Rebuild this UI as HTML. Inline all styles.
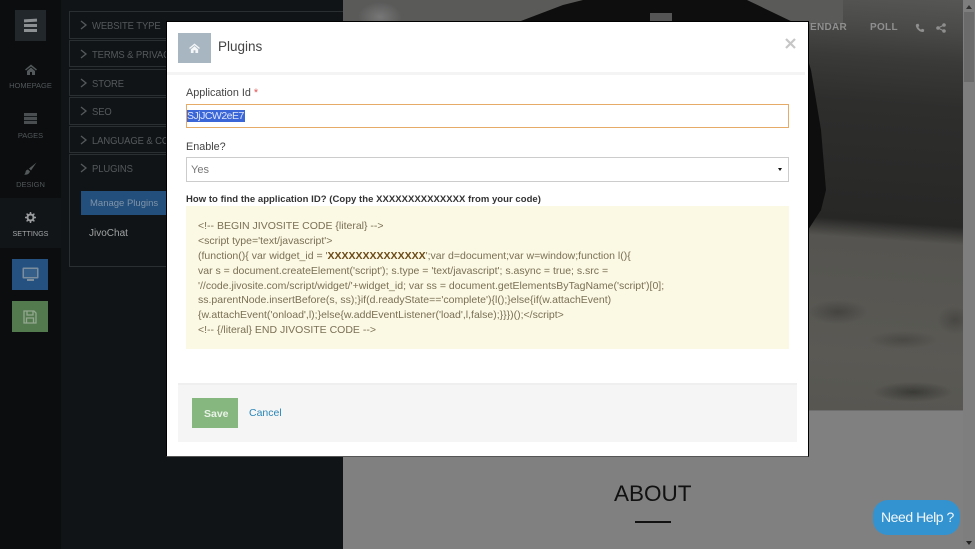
<!DOCTYPE html>
<html><head><meta charset="utf-8"><title>Plugins</title>
<style>
*{box-sizing:border-box}
html,body{margin:0;padding:0;width:975px;height:549px;overflow:hidden;background:#808080;font-family:"Liberation Sans",sans-serif}
.a{position:absolute}
.t{position:absolute;white-space:nowrap}
.acc{position:absolute;left:69px;width:274px;border:1px solid #2a2f31;border-right:0;color:#55595c;font-size:10.5px}
.acc span{position:absolute;left:22px;top:8px;white-space:nowrap;transform:scaleX(.9);transform-origin:left center;letter-spacing:-.1px}
.acc svg{position:absolute;left:10px;top:8px}
.nl{position:absolute;left:0;width:61px;text-align:center;font-size:7.5px;color:#52575a}
.lb{position:absolute;left:186px;font-size:10.8px;color:#444;white-space:nowrap}
.code{position:absolute;left:198px;font-size:10.5px;color:#7a7055;white-space:nowrap}
</style></head><body>

<!-- website behind -->
<div class="a" style="left:0;top:0;width:975px;height:549px;background:#808080"></div>
<div class="a" style="left:343px;top:0;width:620px;height:411px;overflow:hidden;background:
radial-gradient(ellipse 30px 12px at 495px 312px,#454441 0,rgba(69,68,65,0) 100%),
radial-gradient(ellipse 35px 9px at 560px 340px,#4a4945 0,rgba(74,73,69,0) 100%),
radial-gradient(ellipse 40px 10px at 570px 392px,#3a3a37 0,rgba(58,58,55,0) 100%),
radial-gradient(ellipse 18px 14px at 612px 320px,#484743 0,rgba(72,71,67,0) 100%),
linear-gradient(184deg,#565654 0,#4a4a48 7%,#3a3a38 14%,#2e2e2d 24%,#272726 50%,#555450 54%,#5a5954 80%,#55544f 100%)">
<div class="a" style="left:0;top:0;width:500px;height:24px;background:#5a5a59"></div>
<div class="a" style="left:15px;top:2px;width:44px;height:30px;background:radial-gradient(ellipse at center,#777 0,rgba(119,119,119,0) 70%)"></div>
<div class="a" style="left:0;top:0;width:620px;height:240px;background:#0e0e0e;clip-path:polygon(170px 24px,220px 5px,240px 0,404px 0,454px 24px,468px 70px,478px 130px,483px 190px,478px 210px,465px 230px,170px 240px)"></div>
<div class="a" style="left:307px;top:13px;width:22px;height:12px;background:#555"></div>
<div class="a" style="left:0;top:410px;width:620px;height:1px;background:#6d6d6d"></div>
</div>
<div class="t" style="left:810px;top:22px;font-size:10px;font-weight:bold;color:#8f8f8f;letter-spacing:.3px">ENDAR</div>
<div class="t" style="left:870px;top:22px;font-size:10px;font-weight:bold;color:#8f8f8f;letter-spacing:.3px">POLL</div>
<svg class="a" style="left:915px;top:23px" width="10" height="10" viewBox="0 0 10 10"><path d="M1.500 1L3.500.8 4.300 3 3.200 4Q4.300 6 6 6.800L7 5.700 9.200 6.500 9 8.500Q8 9.400 6 8.800 2 7 .8 3Q.7 1.800 1.500 1Z" fill="#8f8f8f"/></svg>
<svg class="a" style="left:936px;top:23px" width="10" height="10" viewBox="0 0 10 10"><g fill="#8f8f8f"><circle cx="8" cy="2" r="1.800"/><circle cx="2" cy="5" r="1.800"/><circle cx="8" cy="8" r="1.800"/></g><path d="M8 2L2 5 8 8" stroke="#8f8f8f" fill="none"/></svg>

<div class="t" style="left:614px;top:481px;font-size:22.500px;color:#111">ABOUT</div>
<div class="a" style="left:635px;top:521px;width:36px;height:2px;background:#111"></div>
<div class="a" style="left:873px;top:500px;width:87px;height:35px;background:#3393d0;border-radius:15px"></div>
<div class="t" style="left:881px;top:509px;font-size:14px;letter-spacing:-.45px;color:#f2f7fb">Need Help ?</div>

<!-- scrollbar -->
<div class="a" style="left:963px;top:0;width:12px;height:549px;background:#7e7e7e"></div>
<div class="a" style="left:964px;top:12px;width:10px;height:70px;background:#6b6b6b"></div>
<div class="a" style="left:966px;top:5px;border:3px solid transparent;border-bottom:4px solid #333;border-top:0"></div>
<div class="a" style="left:966px;top:541px;border:3px solid transparent;border-top:4px solid #222;border-bottom:0"></div>

<!-- settings panel -->
<div class="a" style="left:61px;top:0;width:282px;height:549px;background:#101416"></div>
<div class="acc" style="top:11px;height:28px"><svg width="8" height="10"><path d="M1 1L6 5 1 9" stroke="#55595c" stroke-width="1.300" fill="none"/></svg><span>WEBSITE TYPE</span></div>
<div class="acc" style="top:40px;height:27px"><svg width="8" height="10"><path d="M1 1L6 5 1 9" stroke="#55595c" stroke-width="1.300" fill="none"/></svg><span>TERMS &amp; PRIVACY</span></div>
<div class="acc" style="top:69px;height:27px"><svg width="8" height="10"><path d="M1 1L6 5 1 9" stroke="#55595c" stroke-width="1.300" fill="none"/></svg><span>STORE</span></div>
<div class="acc" style="top:97px;height:28px"><svg width="8" height="10"><path d="M1 1L6 5 1 9" stroke="#55595c" stroke-width="1.300" fill="none"/></svg><span>SEO</span></div>
<div class="acc" style="top:126px;height:27px"><svg width="8" height="10"><path d="M1 1L6 5 1 9" stroke="#55595c" stroke-width="1.300" fill="none"/></svg><span>LANGUAGE &amp; COUNTRY</span></div>
<div class="acc" style="top:154px;height:113px"><svg width="8" height="10"><path d="M1 1L6 5 1 9" stroke="#55595c" stroke-width="1.300" fill="none"/></svg><span>PLUGINS</span></div>
<div class="a" style="left:81px;top:191px;width:90px;height:24px;background:#234f7c"></div>
<div class="t" style="left:90px;top:198px;font-size:9.500px;color:#8094a8">Manage Plugins</div>
<div class="t" style="left:89px;top:228px;font-size:10px;color:#a0a2a3">JivoChat</div>

<!-- nav -->
<div class="a" style="left:0;top:0;width:61px;height:549px;background:#0b0d0e"></div>
<div class="a" style="left:0;top:198px;width:61px;height:50px;background:#111518"></div>
<div class="a" style="left:15px;top:10px;width:31px;height:31px;background:#22272c"></div>
<div class="a" style="left:24px;top:19px;width:13px;height:3px;background:#8d9092;transform:rotate(-3deg)"></div>
<div class="a" style="left:24px;top:24px;width:13px;height:3px;background:#8d9092"></div>
<div class="a" style="left:24px;top:29px;width:13px;height:3px;background:#8d9092"></div>
<svg class="a" style="left:25px;top:64px" width="12" height="11" viewBox="0 0 12 11"><path d="M6 .5L12 5.500 11 6.500 6 2.500 1 6.500 0 5.500ZM2 7L6 3.500 10 7V11H7V8H5V11H2Z" fill="#53585a"/></svg>
<div class="nl" style="top:81px">HOMEPAGE</div>
<svg class="a" style="left:24px;top:113px" width="13" height="11"><rect width="13" height="11" fill="#4a4e50"/><path d="M0 3.500H13M0 7.500H13" stroke="#15181a"/></svg>
<div class="nl" style="top:131px">PAGES</div>
<svg class="a" style="left:24px;top:162px" width="13" height="13" viewBox="0 0 13 13"><path d="M12.500.5L5 6.500 7 8.500ZM4 7.500Q1.500 8 1.500 10.500 1 12 0 12.500 4.500 13.500 6 9.500Z" fill="#53585a"/></svg>
<div class="nl" style="top:180px">DESIGN</div>
<svg class="a" style="left:25px;top:212px" width="11" height="11" viewBox="0 0 11 11"><circle cx="5.500" cy="5.500" r="3" fill="none" stroke="#9a9c9e" stroke-width="2"/><path d="M5.500 0V2.500M5.500 8.500V11M0 5.500H2.500M8.500 5.500H11M1.600 1.600L3.400 3.400M7.600 7.600L9.400 9.400M9.400 1.600L7.600 3.400M3.400 7.600L1.600 9.400" stroke="#9a9c9e" stroke-width="1.500"/></svg>
<div class="nl" style="top:229px;font-size:7.200px;color:#a5a7a9">SETTINGS</div>
<div class="a" style="left:12px;top:259px;width:36px;height:31px;background:#255181"></div>
<svg class="a" style="left:22px;top:267px" width="17" height="15" viewBox="0 0 17 15"><rect x=".5" y=".5" width="16" height="11" rx="1" fill="#7c8e9e"/><rect x="2" y="2" width="13" height="8" fill="#355f88"/><rect x="5" y="12" width="7" height="2" fill="#7c8e9e"/></svg>
<div class="a" style="left:12px;top:301px;width:36px;height:31px;background:#537a4f"></div>
<svg class="a" style="left:23px;top:310px" width="14" height="14" viewBox="0 0 14 14"><path d="M1 1H11L13 3V13H1ZM4 1.500V5H10V1.500M3.500 13V8H10.500V13" fill="none" stroke="#93a88f" stroke-width="1.300"/></svg>

<!-- modal -->
<div class="a" style="left:166px;top:21px;width:643px;height:436px;background:#fff;border:1px solid #000;border-bottom-color:#555"></div>
<div class="a" style="left:178px;top:33px;width:33px;height:30px;background:#a8b6c1"></div>
<svg class="a" style="left:189px;top:43px" width="11" height="10" viewBox="0 0 12 11"><path d="M6 .5L12 5.500 11 6.500 6 2.500 1 6.500 0 5.500ZM2 7L6 3.500 10 7V11H7V8H5V11H2Z" fill="#f4f6f8"/></svg>
<div class="t" style="left:218px;top:39px;font-size:13.500px;color:#444">Plugins</div>
<svg class="a" style="left:785px;top:38px" width="11" height="11"><path d="M1 1L10 10M10 1L1 10" stroke="#c6c6c6" stroke-width="2.200"/></svg>
<div class="a" style="left:167px;top:72px;width:638px;height:3px;background:#f4f4f4"></div>

<div class="lb" style="top:87px">Application Id <span style="color:#e05555">*</span></div>
<div class="a" style="left:186px;top:104px;width:603px;height:24px;background:#fff;border:1px solid #e5ab67"></div>
<div class="t" style="left:187px;top:110px;background:#3a66d8;color:#dfe6fa;font-size:10.500px;line-height:12px;letter-spacing:-.5px;padding-right:1px">SJjJCW2eE7</div>

<div class="lb" style="top:141px">Enable?</div>
<div class="a" style="left:186px;top:157px;width:603px;height:25px;background:#fff;border:1px solid #ccc"></div>
<div class="t" style="left:191px;top:164px;font-size:11px;color:#777">Yes</div>
<div class="a" style="left:778px;top:168px;border:2.500px solid transparent;border-top:3.500px solid #111;border-bottom:0"></div>

<div class="t" style="left:186px;top:194px;font-size:9.500px;font-weight:bold;color:#333;letter-spacing:.04px">How to find the application ID? (Copy the XXXXXXXXXXXXXX from your code)</div>
<div class="a" style="left:186px;top:206px;width:603px;height:143px;background:#fbf8e3"></div>
<div class="code" style="top:220px">&lt;!-- BEGIN JIVOSITE CODE {literal} --&gt;</div>
<div class="code" style="top:235px">&lt;script type='text/javascript'&gt;</div>
<div class="code" style="top:250px">(function(){ var widget_id = '<b style="color:#6b4a16">XXXXXXXXXXXXXX</b>';var d=document;var w=window;function l(){</div>
<div class="code" style="top:265px">var s = document.createElement('script'); s.type = 'text/javascript'; s.async = true; s.src =</div>
<div class="code" style="top:280px">'//code.jivosite.com/script/widget/'+widget_id; var ss = document.getElementsByTagName('script')[0];</div>
<div class="code" style="top:294px">ss.parentNode.insertBefore(s, ss);}if(d.readyState=='complete'){l();}else{if(w.attachEvent)</div>
<div class="code" style="top:309px">{w.attachEvent('onload',l);}else{w.addEventListener('load',l,false);}}})();&lt;/script&gt;</div>
<div class="code" style="top:324px">&lt;!-- {/literal} END JIVOSITE CODE --&gt;</div>

<div class="a" style="left:178px;top:383px;width:619px;height:59px;background:#f5f5f5;border-top:2px solid #efefef"></div>
<div class="a" style="left:192px;top:398px;width:46px;height:30px;background:#86b77f"></div>
<div class="t" style="left:204px;top:408px;font-size:10.500px;font-weight:bold;color:#e9f2e7">Save</div>
<div class="t" style="left:249px;top:407px;font-size:10.500px;color:#2a86b8">Cancel</div>
</body></html>
